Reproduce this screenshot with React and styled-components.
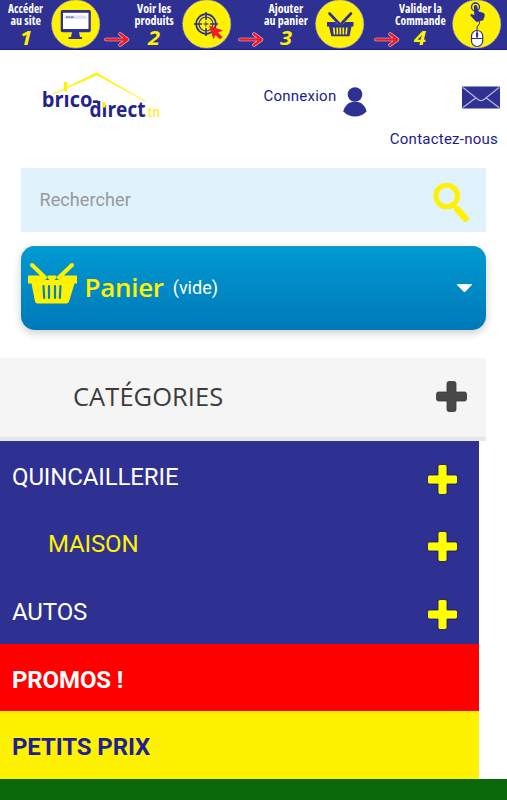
import React, { useLayoutEffect, useRef, useState } from "react";
import styled, { createGlobalStyle } from "styled-components";

const navy = "#2e3092";
const yellow = "#fff200";

const Global = createGlobalStyle`
  * { box-sizing: border-box; }
  body { margin: 0; background: #fff; font-family: Roboto, "Liberation Sans", sans-serif; }
`;

const Page = styled.div`
  width: 507px;
  height: 800px;
  overflow: hidden;
  display: flex;
  flex-direction: column;
`;

const Banner = styled.div`
  flex: none;
  height: 50px;
  display: grid;
  grid-template-columns: 51px 49px 4px 26px 48px 4px 49px 7px 26px 44px 7px 50px 9px 26px 40px 12px 50px;
  background: ${navy};
  border-bottom: 1px solid #17187c;
  svg { display: block; }
`;

const StepLabel = styled.div`
  display: flex;
  flex-direction: column;
  align-items: center;
  height: 49px;
  padding-top: 3px;
  color: #fff;
  font: 700 12px/12px "Open Sans", "Noto Sans", sans-serif;
  font-stretch: 75%;
`;

const StepNumber = styled.div`
  margin-top: 1px;
  color: ${yellow};
  font: italic 700 20px/20px "Open Sans", "Noto Sans", sans-serif;
`;

const FitBox = styled.span`
  display: block;
  width: ${(p) => p.$w}px;
  white-space: nowrap;
`;

const FitInner = styled.span`
  display: inline-block;
  transform-origin: 0 50%;
`;

function Fit({ width, children }) {
  const ref = useRef(null);
  const [scale, setScale] = useState(1);
  useLayoutEffect(() => {
    setScale(width / ref.current.offsetWidth);
  }, [width]);
  return (
    <FitBox $w={width}>
      <FitInner ref={ref} style={{ transform: `scaleX(${scale})` }}>{children}</FitInner>
    </FitBox>
  );
}

function Step({ lines, widths, number }) {
  return (
    <StepLabel>
      <Fit width={widths[0]}>{lines[0]}</Fit>
      <Fit width={widths[1]}>{lines[1]}</Fit>
      <StepNumber><Fit width={12}>{number}</Fit></StepNumber>
    </StepLabel>
  );
}

function Arrow() {
  const d = "M2 39.5H23M16 34l7.500 5.500-7.500 5.500";
  return (
    <svg width="26" height="49" fill="none" strokeLinecap="round" strokeLinejoin="round">
      <path d={d} stroke="#e9c9dc" strokeWidth="3.500" />
      <path d={d} stroke="#f01822" strokeWidth="2.300" />
    </svg>
  );
}

function Disc({ children }) {
  return (
    <svg width="50" height="49" viewBox="0 0 50 49">
      <circle cx="24.700" cy="24" r="24" fill={yellow} stroke="#b9bbd8" strokeWidth="1" strokeDasharray="1.5 1" />
      {children}
    </svg>
  );
}

const MonitorArt = () => (
  <Disc>
    <path fill={navy} d="M11.500 10h26.500q1.800 0 1.800 1.800v18.700q0 1.800-1.800 1.800H28l1 4.700h2v2H17.500V37H20l1-4.700h-9.500q-1.800 0-1.800-1.800V11.800q0-1.800 1.800-1.800Z" />
    <path fill="#fff" d="M12 12.800h25.500v16.200H12z" />
    <path fill="#dddff0" d="M13.500 15.500h22v3.300h-22z" />
    <path stroke="#555a9c" strokeWidth="1.200" strokeDasharray="2 .5" d="M15 17.200h8" />
  </Disc>
);

const TargetArt = () => (
  <Disc>
    <g fill="none" stroke={navy}>
      <circle cx="24" cy="24" r="9.800" strokeWidth="1.700" />
      <circle cx="24" cy="24" r="7" strokeWidth="1.200" />
      <path strokeWidth="1.600" d="M24 12v8M24 28v8M12 24h8M28 24h8" />
      <path strokeWidth="1" d="M21.500 24h5M24 21.500v5" />
    </g>
    <path fill="#ef1c24" d="m27 25.500 14 5-5 2 4.500 4.500-2.500 2.500-4.500-4.500-2 4.500z" />
  </Disc>
);

const BasketArt = () => (
  <Disc>
    <path stroke={navy} strokeWidth="2.600" strokeLinecap="round" d="m14.500 13.500 9.500 10M36 13.500l-9.500 10" />
    <path fill={navy} d="M12 22h8.500l2 2.200h5.500l2-2.200h8.500v4.500h-2L34.500 36.300H16.300L14 26.500h-2Z" />
    <path stroke={yellow} strokeWidth="1.700" d="M18.800 27.500l.6 7M22.300 27.500v7M25.300 27.500v7M28.300 27.500v7M31.800 27.500l-.6 7" />
  </Disc>
);

const MouseArt = () => (
  <Disc>
    <circle cx="23.500" cy="7" r="4" fill="none" stroke={navy} strokeWidth="1.300" />
    <path fill={navy} d="M21.800 6q1.700-2 3.400 0l1 5.300 5 1.400q2 1 1.500 3.300l-1.500 4.300-6.700 1.700-6-6.200q-.5-2 1.300-1.800l2.500 1.300Z" />
    <path fill="none" stroke={navy} strokeWidth="1" d="M27 21q1.500 2.500-.5 4t-1.500 5" />
    <rect x="19.500" y="30.500" width="11.200" height="16" rx="5.500" fill="#fff" stroke={navy} strokeWidth="1.200" />
    <path stroke={navy} strokeWidth="1.100" d="M19.500 38.500h11.200M25 30v8" />
    <rect x="24" y="32.500" width="2.200" height="4.500" rx="1" fill={navy} />
  </Disc>
);

const Header = styled.header`
  flex: none;
  height: 118px;
  display: flex;
  color: #1b1b90;
  font-size: 15px;
  line-height: 20px;
`;

const LogoLink = styled.div`
  width: 263.500px;
  padding: 16px 0 0 36px;
  svg { display: block; }
`;

const Login = styled.div`
  display: flex;
  width: 120.500px;
  padding-top: 36px;
  letter-spacing: 0.24px;
  svg { margin: 0 0 0 6px; }
`;

const Contact = styled.div`
  display: flex;
  flex-direction: column;
  align-items: flex-end;
  width: 116px;
  padding-top: 36px;
  margin-right: 7px;
  letter-spacing: 0.24px;
  text-align: right;
`;

const ContactText = styled.div`
  margin: 20px 2px 0 0;
  white-space: nowrap;
`;

function Logo() {
  return (
    <svg width="130" height="54" viewBox="36 66 130 54">
      <g fontFamily='"Open Sans", "Noto Sans", sans-serif' fontWeight="700" fill="#22248c">
        <text x="41.800" y="107.300" fontSize="21.500" textLength="57" lengthAdjust="spacingAndGlyphs">brıco-</text>
        <text x="89.500" y="117" fontSize="21.500" textLength="56" lengthAdjust="spacingAndGlyphs">dırect</text>
        <text x="144.500" y="117" fontSize="15" fontWeight="600" fill="#ffee20" textLength="15.500" lengthAdjust="spacingAndGlyphs">.tn</text>
      </g>
      <path fill={yellow} d="M52 94.500 96.500 72.800 145.500 101.500 97 75Z" stroke={yellow} strokeWidth=".5" />
      <path fill={yellow} d="M64 82h3.300v9H64zM102.300 102h3.300v5.500h-3.300z" />
    </svg>
  );
}

const UserArt = () => (
  <svg width="26" height="32" viewBox="0 0 26 32">
    <circle cx="13" cy="8.500" r="7.300" fill={navy} />
    <path fill={navy} d="M7 17q6-2.500 12 0 4.500 3 5.600 8.500-5 5-11.600 5T1.200 25.500Q2.500 20 7 17Z" />
  </svg>
);

const MailArt = () => (
  <svg width="38" height="23" viewBox="0 0 38 23">
    <rect y=".5" width="38" height="22" rx="1" fill={navy} />
    <path fill="none" stroke="#b4b6dc" strokeWidth="1.300" d="m1 1.500 15 12q3 2.300 6 0L37 1.500M1 21.500l13-9.700M37 21.500l-13-9.700" />
  </svg>
);

const Search = styled.div`
  flex: none;
  display: flex;
  align-items: center;
  justify-content: space-between;
  width: 465px;
  height: 64px;
  margin-left: 21px;
  padding: 0 14px 0 18.500px;
  background: #e0f2fc;
  color: #999;
  font-size: 18px;
  svg { margin-top: 2px; }
`;

const SearchText = styled.span`
  letter-spacing: 0.1px;
  margin-bottom: 2px;
`;

const Cart = styled.div`
  flex: none;
  display: flex;
  align-items: center;
  width: 465px;
  height: 84px;
  margin: 14px 0 0 21px;
  padding: 0 13px 0 6px;
  border-radius: 14px;
  background: linear-gradient(#009ad3, #0079b8);
  box-shadow: 0 3px 9px rgba(0, 0, 0, 0.2), inset 0 1px #2497c6;
  color: #fff;
`;

const CartIcon = styled.svg`
  margin-bottom: 11px;
`;

const CartTitle = styled.span`
  margin: 0 0 2px 7.500px;
  color: ${yellow};
  font: 600 26px/36px "Open Sans", "Noto Sans", sans-serif;
  letter-spacing: -0.3px;
`;

const CartCount = styled.span`
  flex: 1;
  margin: 0 0 2px 9px;
  font-size: 18px;
`;

const Categories = styled.div`
  flex: none;
  display: flex;
  align-items: center;
  justify-content: space-between;
  width: 486px;
  height: 83px;
  margin-top: 28px;
  padding: 0 19px 3px 73px;
  background: #f5f5f5;
  border-bottom: 4px solid #e7e7e7;
  color: #3c3c3c;
  font: 500 25.500px/34px "Open Sans", "Noto Sans", sans-serif;
  letter-spacing: 0.05px;
`;

const Menu = styled.nav`
  flex: none;
  width: 479px;
`;

const MenuRow = styled.div`
  display: flex;
  align-items: center;
  justify-content: space-between;
  height: 67.600px;
  padding: ${(p) => `0 21px 0 ${p.$indent || 12}px`};
  background: ${(p) => p.$bg || navy};
  color: ${(p) => p.$color || "#fff"};
  font-size: 24px;
  font-weight: ${(p) => (p.$bold ? 700 : 400)};
  letter-spacing: -0.12px;
  svg { margin-top: 9px; }
`;

const MenuText = styled.span`
  margin-top: 4px;
`;

function Plus({ size, color, edge }) {
  return (
    <svg width={size} height={size} viewBox="0 0 31 31">
      <path
        fill={color}
        stroke={edge}
        strokeWidth=".8"
        d="M13 .5h5q2 0 2 2V11h8.500q2 0 2 2v5q0 2-2 2H20v8.500q0 2-2 2h-5q-2 0-2-2V20H2.500q-2 0-2-2v-5q0-2 2-2H11V2.500q0-2 2-2Z"
      />
    </svg>
  );
}

export default function App() {
  return (
    <Page>
      <Global />
      <Banner>
        <Step lines={["Accéder", "au site"]} widths={[35, 30]} number="1" />
        <MonitorArt /><span /><Arrow />
        <Step lines={["Voir les", "produits"]} widths={[34, 39]} number="2" />
        <span /><TargetArt /><span /><Arrow />
        <Step lines={["Ajouter", "au panier"]} widths={[35, 44]} number="3" />
        <span /><BasketArt /><span /><Arrow />
        <Step lines={["Valider la", "Commande"]} widths={[43, 51]} number="4" />
        <span /><MouseArt />
      </Banner>
      <Header>
        <LogoLink><Logo /></LogoLink>
        <Login>Connexion<UserArt /></Login>
        <Contact><MailArt /><ContactText>Contactez-nous</ContactText></Contact>
      </Header>
      <Search>
        <SearchText>Rechercher</SearchText>
        <svg width="40" height="44" viewBox="0 0 40 44">
          <circle cx="14.700" cy="17" r="10.800" fill="none" stroke={yellow} strokeWidth="5" />
          <path stroke={yellow} strokeWidth="6.500" strokeLinecap="round" d="m25 30 8.500 9.500" />
        </svg>
      </Search>
      <Cart>
        <CartIcon width="50" height="44" viewBox="27 261 50 44">
          <path stroke={yellow} strokeWidth="4" strokeLinecap="round" d="m32 265 13 12.500M72 265 59 277.500" />
          <path fill={yellow} d="M28 275.500h13l4.500 4.500h4l-2-2v-2.500h9v2.500l-2 2h4l4.500-4.500h15v8h-3.500L69 301.500q-.5 2-2.500 2h-29q-2 0-2.500-2l-3.500-18H28Z" />
          <path stroke="#0084bf" strokeWidth="2.200" strokeLinecap="round" d="m43.500 286 .7 12M49 286v12M55 286v12M60.500 286l-.7 12" />
        </CartIcon>
        <CartTitle>Panier</CartTitle>
        <CartCount>(vide)</CartCount>
        <svg width="17" height="10"><path fill="#fff" d="M1.500 1h14q1 0 .3 1L9.500 8.500q-1 1-2 0L1 2q-.6-1 .5-1Z" /></svg>
      </Cart>
      <Categories>CATÉGORIES<Plus size={31} color="#484848" edge="#373737" /></Categories>
      <Menu>
        <MenuRow><MenuText>QUINCAILLERIE</MenuText><Plus size={31} color="#ffff00" edge="#11116e" /></MenuRow>
        <MenuRow $indent={48} $color={yellow}><MenuText>MAISON</MenuText><Plus size={31} color="#ffff00" edge="#11116e" /></MenuRow>
        <MenuRow><MenuText>AUTOS</MenuText><Plus size={31} color="#ffff00" edge="#11116e" /></MenuRow>
        <MenuRow $bg="#ff0000" $bold><MenuText>PROMOS !</MenuText></MenuRow>
        <MenuRow $bg={yellow} $color="#1f1f91" $bold><MenuText>PETITS PRIX</MenuText></MenuRow>
      </Menu>
      <MenuRow $bg="#0b690b" />
    </Page>
  );
}
